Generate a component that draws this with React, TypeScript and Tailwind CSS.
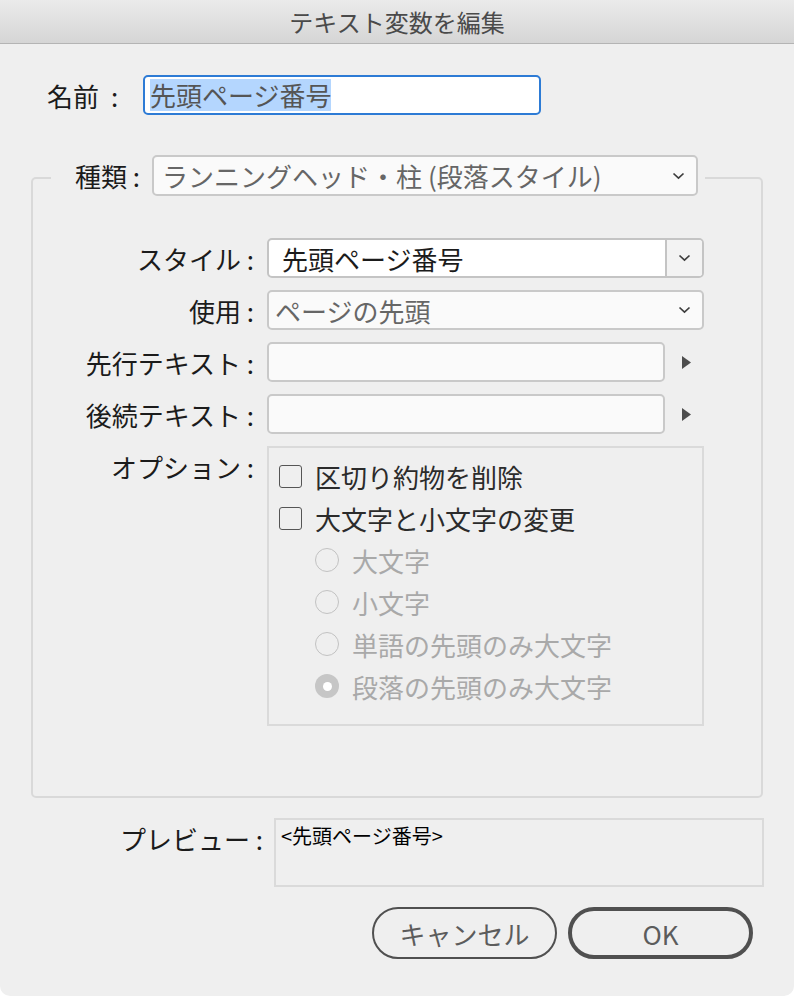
import React from 'react';

const font = "font-['Noto_Sans_CJK_JP','Noto_Sans',sans-serif]";

const Chevron = () => (
  <svg width="13" height="8" viewBox="0 0 13 8" fill="none">
    <path d="M1.5 1.5 L6.5 6.2 L11.5 1.5" stroke="#3d3d3d" strokeWidth="1.7" />
  </svg>
);

const Arrow = () => (
  <svg width="9" height="13" viewBox="0 0 9 13">
    <path d="M0 0 L9 6.5 L0 13 Z" fill="#4d4d4d" />
  </svg>
);

function Row({ label, children }: { label: string; children: React.ReactNode }) {
  return (
    <div className="flex items-center h-[40px]">
      <div className="w-[222px] text-right text-[26px] text-[#1b1b1b] pr-[1px]">{label}</div>
      <div className="ml-[12px] flex items-center h-full">{children}</div>
    </div>
  );
}

function Checkbox({ label }: { label: string }) {
  return (
    <div className="flex items-center h-[42px]">
      <div className="w-[23px] h-[23px] rounded-[3px] border-[1.5px] border-[#555]" />
      <span className="ml-[13px] text-[26px] text-[#2b2b2b]">{label}</span>
    </div>
  );
}

function Radio({ label, checked }: { label: string; checked?: boolean }) {
  return (
    <div className="flex items-center h-[42px] pl-[36px]">
      {checked ? (
        <div className="w-[24px] h-[24px] rounded-full bg-[#c6c6c6] flex items-center justify-center">
          <div className="w-[9px] h-[9px] rounded-full bg-white" />
        </div>
      ) : (
        <div className="w-[24px] h-[24px] rounded-full border-[1.5px] border-[#c2c2c2]" />
      )}
      <span className="ml-[13px] text-[26px] text-[#a9a9a9]">{label}</span>
    </div>
  );
}

export default function App() {
  return (
    <div className={`min-h-screen bg-white ${font}`}>
      <div className="w-[794px] h-[996px] bg-[#efefef] rounded-b-[10px] overflow-hidden flex flex-col">
        <div className="h-[44px] shrink-0 border-b border-[#b4b4b4] bg-gradient-to-b from-[#ebebeb] to-[#d5d5d5] flex items-center justify-center text-[24px] text-[#4a4a4a]">
          テキスト変数を編集
        </div>

        <div className="flex items-center pl-[47px] mt-[31px]">
          <div className="w-[96px] text-[26px] text-[#1b1b1b]">
            名前<span className="ml-[12px]">:</span>
          </div>
          <div className="w-[398px] h-[40px] border-2 border-[#2d7bd5] rounded-[5px] bg-white flex items-center">
            <span className="ml-[5px] bg-[#b4d6fe] text-[26px] leading-[32px] text-[#555]">先頭ページ番号</span>
          </div>
        </div>

        <fieldset className="mt-[40px] mx-[31px] border-2 border-[#d9d9d9] rounded-[5px] pb-[70px]">
          <legend className="ml-[18px] pl-[24px] pr-[7px] pb-[5px]">
            <div className="flex items-center">
              <span className="text-[26px] text-[#1b1b1b]">種類 :</span>
              <div className="ml-[12px] w-[546px] h-[41px] border-2 border-[#c9c9c9] rounded-[5px] bg-[#fafafa] flex items-center justify-between pl-[8px] pr-[11px]">
                <span className="text-[26px] text-[#666]">ランニングヘッド・柱 (段落スタイル)</span>
                <Chevron />
              </div>
            </div>
          </legend>

          <div className="mt-[37px] flex flex-col gap-[12px]">
            <Row label="スタイル :">
              <div className="w-[437px] h-[40px] border-2 border-[#c4c4c4] rounded-[5px] bg-white flex overflow-hidden">
                <div className="flex-1 flex items-center pl-[13px] text-[26px] text-[#1b1b1b]">先頭ページ番号</div>
                <div className="w-[37px] border-l-2 border-[#c4c4c4] bg-[#f3f3f3] flex items-center justify-center">
                  <Chevron />
                </div>
              </div>
            </Row>
            <Row label="使用 :">
              <div className="w-[437px] h-[40px] border-2 border-[#c9c9c9] rounded-[5px] bg-[#fafafa] flex items-center justify-between pl-[6px] pr-[11px]">
                <span className="text-[26px] text-[#666]">ページの先頭</span>
                <Chevron />
              </div>
            </Row>
            <Row label="先行テキスト :">
              <div className="w-[398px] h-[40px] border-2 border-[#c9c9c9] rounded-[5px] bg-[#fafafa]" />
              <div className="ml-[17px]">
                <Arrow />
              </div>
            </Row>
            <Row label="後続テキスト :">
              <div className="w-[398px] h-[40px] border-2 border-[#c9c9c9] rounded-[5px] bg-[#fafafa]" />
              <div className="ml-[17px]">
                <Arrow />
              </div>
            </Row>
            <div className="flex items-start">
              <div className="w-[222px] h-[40px] flex items-center justify-end text-[26px] text-[#1b1b1b] pr-[1px]">
                オプション :
              </div>
              <div className="ml-[12px] w-[437px] h-[280px] border-2 border-[#dadada] pl-[10px] pt-[7px]">
                <Checkbox label="区切り約物を削除" />
                <Checkbox label="大文字と小文字の変更" />
                <Radio label="大文字" />
                <Radio label="小文字" />
                <Radio label="単語の先頭のみ大文字" />
                <Radio label="段落の先頭のみ大文字" checked />
              </div>
            </div>
          </div>
        </fieldset>

        <div className="mt-[20px] flex items-start">
          <div className="w-[263px] h-[40px] flex items-center justify-end text-[26px] text-[#1b1b1b]">プレビュー :</div>
          <div className="ml-[11px] w-[490px] h-[69px] border-2 border-[#dadada] pl-[5px] pt-[1px]">
            <span className="text-[20px] text-black">&lt;先頭ページ番号&gt;</span>
          </div>
        </div>

        <div className="mt-[20px] flex justify-end pr-[41px] gap-[11px]">
          <button className="w-[185px] h-[52px] rounded-full border-2 border-[#505050] text-[26px] text-[#5c5c5c]">
            キャンセル
          </button>
          <button className="w-[185px] h-[52px] rounded-full border-4 border-[#505050] text-[26px] text-[#5c5c5c]">
            OK
          </button>
        </div>
      </div>
    </div>
  );
}
